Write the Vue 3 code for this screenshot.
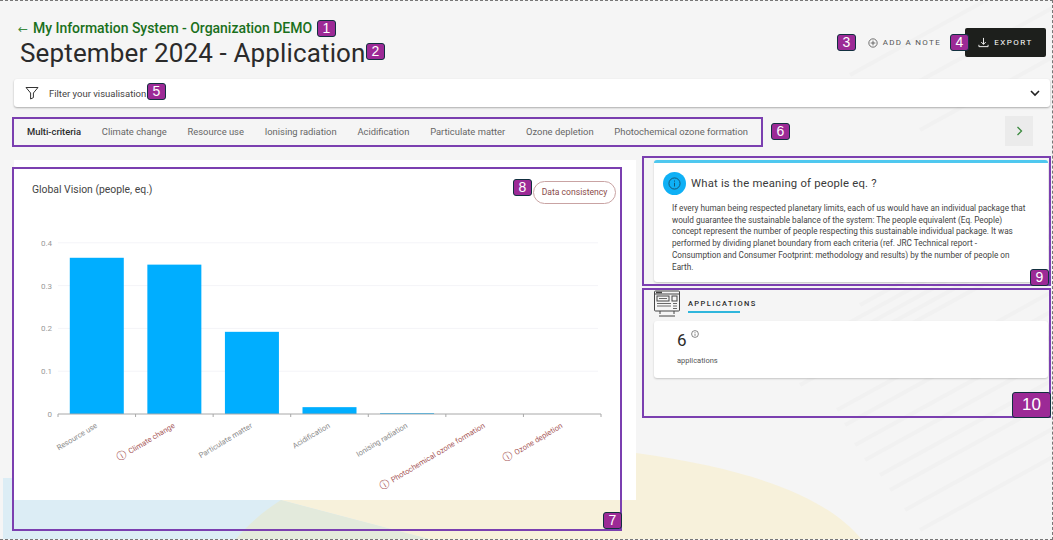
<script setup>
const tabs = [
  'Multi-criteria',
  'Climate change',
  'Resource use',
  'Ionising radiation',
  'Acidification',
  'Particulate matter',
  'Ozone depletion',
  'Photochemical ozone formation'
]

const plot = { left: 58, right: 601, base: 196, unit: 428 }
const step = (plot.right - plot.left) / 7
const barWidth = 54

const bars = [
  { label: 'Resource use', value: 0.365 },
  { label: 'Climate change', value: 0.349, warn: true },
  { label: 'Particulate matter', value: 0.192 },
  { label: 'Acidification', value: 0.016 },
  { label: 'Ionising radiation', value: 0.002 },
  { label: 'Photochemical ozone formation', value: 0, warn: true },
  { label: 'Ozone depletion', value: 0, warn: true }
].map((b, i) => ({
  ...b,
  cx: plot.left + step * (i + 0.5),
  h: b.value * plot.unit
}))

const ticks = [0, 0.1, 0.2, 0.3, 0.4].map(v => ({ v, y: plot.base - v * plot.unit }))

// faint stripes of the page background
const stripes = [
  [837, 410], [845, 425], [855, 445], [865, 460], [880, 475], [890, 490], [905, 510], [920, 530],
  [800, 385], [815, 365], [830, 345], [845, 325], [860, 305],
  [850, 75], [885, 100], [920, 130]
].map(([x, y]) => `M${x} ${y}L1053 ${y - (1053 - x) * 0.55}`)
</script>

<template>
  <div class="page">
    <svg class="backdrop" width="1053" height="540" viewBox="0 0 1053 540">
      <path d="M3 478H281V500L433 540H3Z" fill="#dcedf5" />
      <path d="M281 500L433 540H862C830 500 760 470 636 453H281Z" fill="#f7f1db" />
      <path d="M235 540C248 525 262 512 281 500L433 540Z" fill="#e3eadc" />
      <g fill="none" stroke="#f1f1f1" stroke-width="4">
        <path v-for="d in stripes" :key="d" :d="d" />
      </g>
    </svg>

    <header class="top">
      <div>
        <a class="back"><span class="arrow">←</span>My Information System - Organization DEMO</a>
        <h1>September 2024 - Application</h1>
      </div>
      <div class="actions">
        <button class="note">
          <svg width="10" height="10" viewBox="0 0 12 12" fill="none" stroke="#555" stroke-width="1">
            <circle cx="6" cy="6" r="5" />
            <path d="M6 3.2v5.6M3.2 6h5.6" />
          </svg>
          ADD A NOTE
        </button>
        <button class="export">
          <svg width="11" height="11" viewBox="0 0 12 12" fill="none" stroke="#fff" stroke-width="1">
            <path d="M6 1v7M3.5 5.5L6 8l2.5-2.5M1 8.5v2h10v-2" />
          </svg>
          EXPORT
        </button>
      </div>
    </header>

    <div class="filter">
      <svg width="14" height="14" viewBox="0 0 14 14" fill="none" stroke="#333" stroke-width="1">
        <path d="M1 1.5h12L8.4 7v4.6L5.6 13V7Z" stroke-linejoin="round" />
      </svg>
      <span>Filter your visualisation</span>
      <svg class="chev" width="10" height="7" viewBox="0 0 10 7" fill="none" stroke="#222" stroke-width="1.6">
        <path d="M1 1l4 4 4-4" />
      </svg>
    </div>

    <nav class="tabbar">
      <div class="tabs">
        <span v-for="(t, i) in tabs" :key="t" class="tab" :class="{ active: i === 0 }">{{ t }}</span>
      </div>
      <button class="next">
        <svg width="7" height="10" viewBox="0 0 7 10" fill="none" stroke="#3b8a3e" stroke-width="1.3">
          <path d="M1.5 1l4 4-4 4" />
        </svg>
      </button>
    </nav>

    <main class="content">
      <section class="chart">
        <div class="chart-head">
          <h2>Global Vision (people, eq.)</h2>
          <span class="pill">Data consistency</span>
        </div>
        <svg class="plot" width="622" height="282" viewBox="0 0 622 282">
          <g v-for="t in ticks" :key="t.v">
            <line v-if="t.v" :x1="plot.left" :x2="plot.right - 3" :y1="t.y" :y2="t.y" stroke="#f4f4f8" />
            <text x="52" :y="t.y + 3" text-anchor="end" class="tick">{{ t.v }}</text>
          </g>
          <rect
            v-for="b in bars"
            :key="b.label"
            :x="b.cx - barWidth / 2"
            :y="plot.base - b.h"
            :width="barWidth"
            :height="b.h"
            fill="#00aeff"
          />
          <line :x1="plot.left" :x2="plot.right" :y1="plot.base" :y2="plot.base" stroke="#a8a8a8" />
          <line
            v-for="n in 8"
            :key="n"
            :x1="plot.left + step * (n - 1)"
            :x2="plot.left + step * (n - 1)"
            :y1="plot.base"
            :y2="plot.base + 3"
            stroke="#a8a8a8"
          />
          <text
            v-for="b in bars"
            :key="b.label + 'x'"
            :transform="`translate(${b.cx + 1} ${plot.base + 13}) rotate(-31)`"
            text-anchor="end"
            class="cat"
            :class="{ warn: b.warn }"
          ><tspan v-if="b.warn" class="warn-icon">ⓘ </tspan>{{ b.label }}</text>
        </svg>
      </section>

      <aside class="side">
        <div class="info">
          <div class="info-head">
            <span class="info-dot">
              <svg width="13" height="13" viewBox="0 0 14 14" fill="none" stroke="#14506e" stroke-width="1">
                <circle cx="7" cy="7" r="6" />
                <path d="M7 6.2v4M7 3.8v1.2" />
              </svg>
            </span>
            <h3>What is the meaning of people eq. ?</h3>
          </div>
          <p>If every human being respected planetary limits, each of us would have an individual package that would guarantee the sustainable balance of the system: The people equivalent (Eq. People) concept represent the number of people respecting this sustainable individual package. It was performed by dividing planet boundary from each criteria (ref. JRC Technical report -<br />Consumption and Consumer Footprint: methodology and results) by the number of people on<br />Earth.</p>
        </div>

        <div class="apps-head">
          <svg width="26" height="27" viewBox="0 0 26 27" fill="none" stroke="#444" stroke-width="1">
            <rect x="0.5" y="1" width="25" height="20" rx="1" />
            <path d="M0.5 4h25M6 21v3M20 21v3M5 26h16" />
            <path d="M2 2.5h6" stroke-width="1.6" />
            <rect x="3" y="6" width="12" height="5" />
            <rect x="18" y="6" width="5" height="5" />
            <path d="M5 8.5h8M3 13.5h14M3 16h14M19 13.5h4M19 16h4M19 18.5h4" stroke-width=".8" />
          </svg>
          <h4>APPLICATIONS</h4>
        </div>
        <div class="apps">
          <div class="count">6
            <svg width="8" height="8" viewBox="0 0 8 8" fill="none" stroke="#555" stroke-width=".7">
              <circle cx="4" cy="4" r="3.4" />
              <path d="M4 3.6v2.3M4 2v.8" />
            </svg>
          </div>
          <div class="unit">applications</div>
        </div>
      </aside>
    </main>

    <!-- annotation layer from the documentation screenshot -->
    <div class="frame" style="left:12px;top:116px;width:751px;height:30px"></div>
    <div class="frame" style="left:12px;top:166px;width:610px;height:364px"></div>
    <div class="frame" style="left:642px;top:155px;width:409px;height:130px"></div>
    <div class="frame" style="left:642px;top:287px;width:409px;height:130px"></div>
    <span class="badge" style="left:317px;top:19px">1</span>
    <span class="badge" style="left:366px;top:42px">2</span>
    <span class="badge" style="left:837px;top:33px">3</span>
    <span class="badge" style="left:950px;top:33px">4</span>
    <span class="badge" style="left:147px;top:82px">5</span>
    <span class="badge" style="left:771px;top:122px">6</span>
    <span class="badge" style="left:603px;top:511px">7</span>
    <span class="badge" style="left:513px;top:178px">8</span>
    <span class="badge" style="left:1030px;top:268px">9</span>
    <span class="badge wide" style="left:1012px;top:391px">10</span>
  </div>
</template>

<style scoped>
.page {
  position: relative;
  width: 1053px;
  height: 540px;
  overflow: hidden;
  box-sizing: border-box;
  padding: 19px 2px 0 14px;
  background: #f5f5f5;
  border-top: 1px dashed #777;
  border-right: 1px dashed #777;
  border-bottom: 1px dashed #777;
  font-family: Roboto, "Noto Sans", sans-serif;
  color: #2b2b2b;
}
.backdrop {
  position: absolute;
  left: 0;
  top: -1px;
}
.top {
  position: relative;
  display: flex;
  justify-content: space-between;
  height: 59px;
}
.back {
  display: block;
  margin-left: 4px;
  font-size: 14px;
  line-height: 16px;
  font-weight: 500;
  color: #1a701c;
  letter-spacing: -0.03px;
}
.arrow {
  display: inline-block;
  width: 15px;
  font-family: "DejaVu Sans", sans-serif;
  font-size: 12px;
  font-weight: 400;
  color: #3b8a3e;
}
h1 {
  margin: 0 0 0 6px;
  font-size: 26px;
  line-height: 32px;
  font-weight: 400;
  letter-spacing: 0.14px;
}
.actions {
  display: flex;
  align-items: center;
  gap: 24px;
  height: 29px;
  margin-top: 8px;
  margin-right: 4px;
}
button {
  display: flex;
  align-items: center;
  gap: 5px;
  border: none;
  background: none;
  padding: 0;
  font-family: inherit;
  font-size: 8px;
  letter-spacing: 1.5px;
}
.note {
  letter-spacing: 1.3px;
  color: #555;
}
.export {
  height: 29px;
  width: 81px;
  justify-content: center;
  border-radius: 2px;
  background: #1d1f1c;
  color: #fff;
}
.filter {
  position: relative;
  display: flex;
  align-items: center;
  gap: 10px;
  height: 28px;
  padding: 0 10px 0 11px;
  background: #fff;
  border-radius: 3px;
  box-shadow: 0 1px 2px rgba(0, 0, 0, 0.3);
  font-size: 9.5px;
  color: #444;
}
.chev {
  margin-left: auto;
}
.tabbar {
  position: relative;
  display: flex;
  justify-content: space-between;
  height: 30px;
  margin: 9px 17px 0 0;
}
.tabs {
  display: flex;
  align-items: center;
  gap: 20.8px;
  padding-left: 13px;
  font-size: 9.4px;
  color: #666;
}
.active {
  color: #2b2b2b;
  font-weight: 500;
}
.next {
  width: 28px;
  height: 30px;
  justify-content: center;
  background: #ebebeb;
}
.content {
  position: relative;
  display: flex;
  gap: 18px;
  margin-top: 14px;
}
.chart {
  width: 622px;
  height: 340px;
  background: #fff;
}
.chart-head {
  display: flex;
  justify-content: space-between;
  height: 58px;
  padding: 23px 20px 0 18px;
  box-sizing: border-box;
}
h2 {
  margin: 0;
  font-size: 10.4px;
  font-weight: 400;
  line-height: 14px;
  color: #444;
}
.pill {
  box-sizing: border-box;
  width: 83px;
  height: 23px;
  margin-top: -2px;
  border: 1px solid #c9a3a3;
  border-radius: 12px;
  background: #fff;
  font-size: 8.6px;
  line-height: 21px;
  text-align: center;
  color: #8a4a4a;
}
.plot {
  display: block;
  margin-left: -14px;
  overflow: visible;
}
.tick {
  font-size: 8px;
  fill: #999;
}
.cat {
  font-size: 7.6px;
  fill: #8c8c8c;
}
.cat.warn {
  fill: #a85a5a;
}
.warn-icon {
  font-family: "DejaVu Sans", sans-serif;
  font-size: 10px;
}
.side {
  width: 394px;
}
.info {
  height: 122px;
  box-sizing: border-box;
  padding: 9px 9px 0 9px;
  background: #fff;
  border-top: 3px solid #4fc8ef;
  border-radius: 3px;
  box-shadow: 0 1px 2px rgba(0, 0, 0, 0.2);
}
.info-head {
  display: flex;
  align-items: center;
  gap: 5px;
}
.info-dot {
  display: flex;
  align-items: center;
  justify-content: center;
  width: 23px;
  height: 23px;
  border-radius: 50%;
  background: #0fb0f5;
}
h3 {
  margin: 0;
  font-size: 11.3px;
  font-weight: 400;
  letter-spacing: 0.2px;
  color: #3a3a3a;
}
p {
  width: 358px;
  margin: 8px 0 0 9px;
  font-size: 8.2px;
  line-height: 11.7px;
  color: #444;
}
.apps-head {
  display: flex;
  align-items: flex-start;
  gap: 8px;
  height: 34px;
  margin-top: 5px;
}
.apps-head svg {
  margin-top: 3px;
}
h4 {
  position: relative;
  margin: 12px 0 0;
  font-size: 7.5px;
  line-height: 9px;
  font-weight: 500;
  letter-spacing: 1.4px;
}
h4::after {
  content: "";
  position: absolute;
  left: 0;
  top: 12px;
  width: 52px;
  height: 2px;
  background: #2fb6dc;
}
.apps {
  height: 57px;
  box-sizing: border-box;
  padding: 9px 23px;
  background: #fff;
  border-radius: 3px;
  box-shadow: 0 1px 2px rgba(0, 0, 0, 0.2);
}
.count {
  display: flex;
  align-items: flex-start;
  gap: 4px;
  font-size: 17px;
  line-height: 20px;
}
.count svg {
  margin-top: 0;
}
.unit {
  margin-top: 6px;
  font-size: 7.5px;
  color: #555;
}
.frame {
  position: absolute;
  box-sizing: border-box;
  border: 2px solid #7b3fb0;
  pointer-events: none;
}
.badge {
  position: absolute;
  box-sizing: border-box;
  width: 19px;
  height: 17px;
  border: 1px solid #12303f;
  border-radius: 3px;
  background: #9c2a96;
  color: #fff;
  font-family: "Liberation Sans", sans-serif;
  font-size: 14px;
  line-height: 14px;
  text-align: center;
}
.badge.wide {
  width: 39px;
  height: 26px;
  font-size: 17px;
  line-height: 24px;
}
</style>
